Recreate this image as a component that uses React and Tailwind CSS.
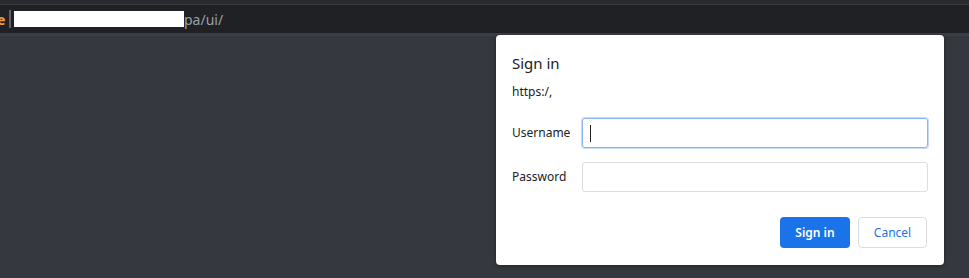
import React from "react";

const font = { fontFamily: '"Noto Sans", "Open Sans", Arial, sans-serif' };

function AddressBar() {
  return (
    <div className="flex flex-col">
      <div className="h-[4px] bg-[#2a2b2e]" />
      <div className="h-[1px] bg-[#3a3b3f]" />
      <div className="flex h-[28px] items-center bg-[#202124]">
        <span className="-ml-[3px] w-[9px] text-[14px] font-bold text-[#e8a33d]">e</span>
        <span className="ml-[3px] h-[18px] w-[2px] bg-[#5f6368]" />
        <span className="ml-[3px] h-[16px] w-[170px] bg-white" />
        <span className="text-[14px] text-[#9aa0a6]">pa/ui/</span>
      </div>
      <div className="h-[3px] bg-[#3b3e43]" />
    </div>
  );
}

function Field({ label, focused }) {
  return (
    <div className="flex items-center">
      <label className="w-[70px] text-[12px] text-[#202124]">{label}</label>
      <div
        className={`relative h-[30px] flex-1 rounded-[3px] border ${
          focused ? "border-[#8ab4f8] ring-1 ring-[#c6dafc]" : "border-[#dadce0]"
        }`}
      >
        {focused && <span className="absolute left-[7px] top-[6px] h-[17px] w-[1px] bg-[#202124]" />}
      </div>
    </div>
  );
}

export default function App() {
  return (
    <div className="relative h-[278px] w-[969px] overflow-hidden bg-[#35393f]" style={font}>
      <AddressBar />
      <div className="absolute left-[496px] top-[35px] flex h-[230px] w-[448px] flex-col rounded-[4px] bg-white px-4 pt-[18px] shadow-[0_1px_4px_rgba(0,0,0,0.4)]">
        <h2 className="text-[15px] leading-[20px] text-[#202124]">Sign in</h2>
        <p className="mt-[11px] text-[12px] leading-[16px] text-[#202124]">https:/,</p>
        <div className="mt-[18px] flex flex-col gap-[14px]">
          <Field label="Username" focused />
          <Field label="Password" />
        </div>
        <div className="mt-[25px] flex justify-end gap-2 pr-px">
          <button className="h-[31px] w-[70px] rounded-[4px] bg-[#1a73e8] text-[12px] font-semibold text-white">
            Sign in
          </button>
          <button className="h-[31px] w-[69px] rounded-[4px] border border-[#dadce0] bg-white text-[12px] text-[#1a73e8]">
            Cancel
          </button>
        </div>
      </div>
    </div>
  );
}
